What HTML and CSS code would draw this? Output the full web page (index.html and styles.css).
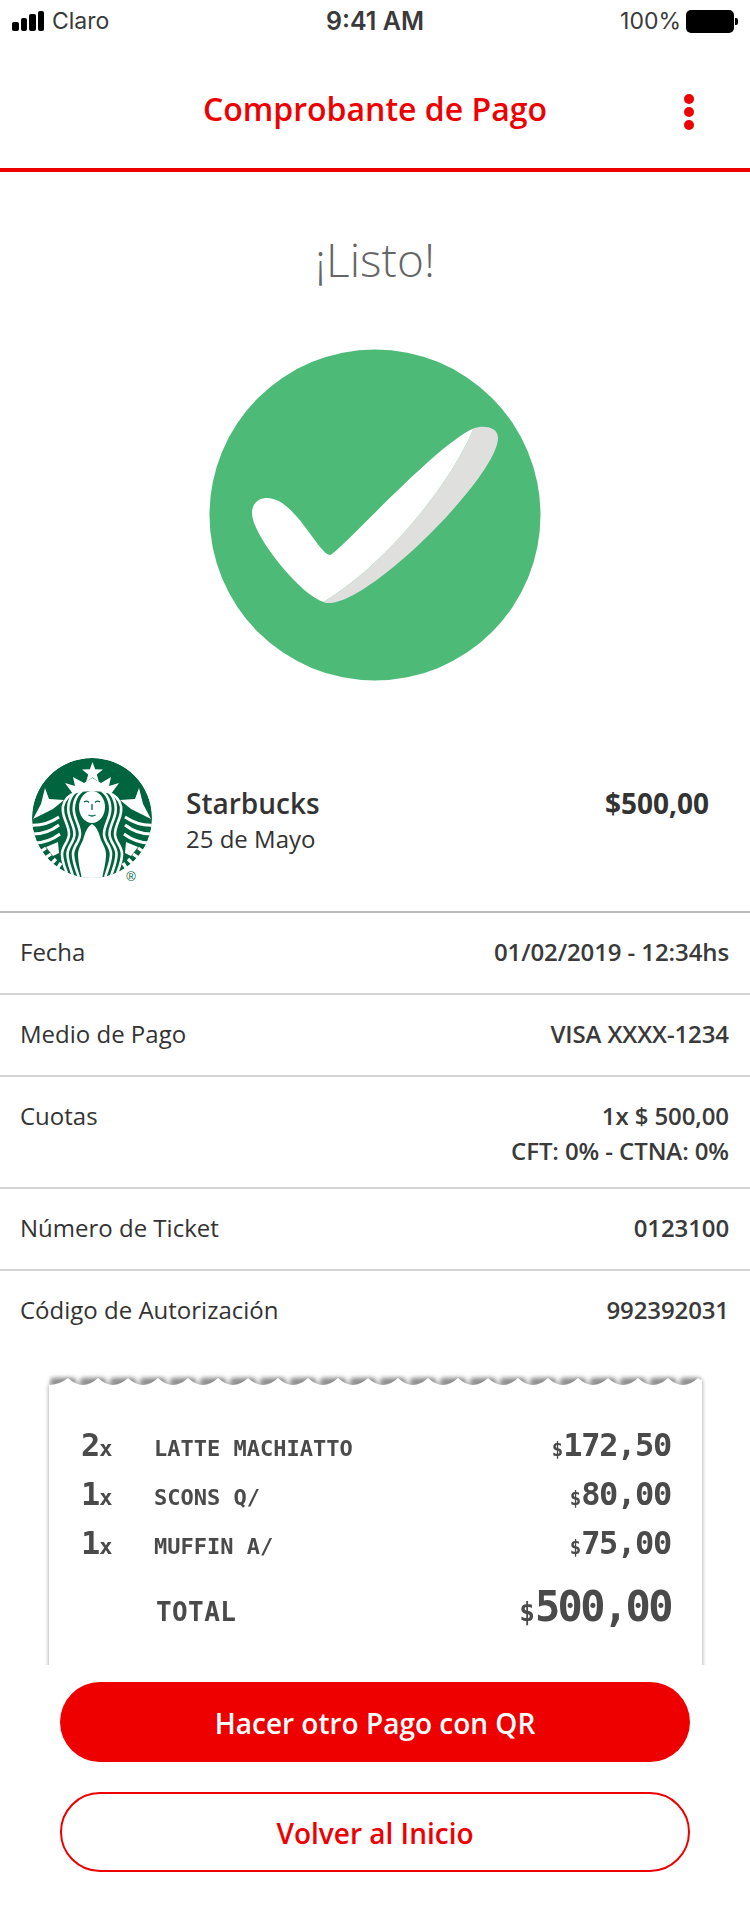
FILE: index.html
```html
<!DOCTYPE html>
<html lang="es">
<head>
<meta charset="utf-8">
<title>Comprobante de Pago</title>
<link rel="stylesheet" href="styles.css">
</head>
<body>
<div class="status">
  <div class="status-left">
    <span class="signal"><i class="b1"></i><i class="b2"></i><i class="b3"></i><i class="b4"></i></span>
    <span>Claro</span>
  </div>
  <div class="status-time">9:41 AM</div>
  <div class="status-right">
    <span>100%</span>
    <span class="battery"></span>
  </div>
</div>
<header class="topbar">
  <h1>Comprobante de Pago</h1>
  <div class="dots"><i></i><i></i><i></i></div>
</header>
<section class="hero">
  <h2>¡Listo!</h2>
  <svg class="check" width="350" height="350" viewBox="0 0 350 350">
    <circle cx="175" cy="175" r="165.5" fill="#4dba78"/>
    <path d="M273.5 88.5C282 85 298 86 298 98C298 135 170 265 128 263C126 263 124 262.5 123.5 262C185 225 250 145 273.5 88.5Z" fill="#dfdfdd"/>
    <path d="M123.5 262C100 255 52 195 52 173C52 162 60 158 67 158C95 158 118 214 130 215C137 215 235 105 273.5 88.5C250 145 185 225 123.5 262Z" fill="#fff"/>
  </svg>
</section>
<section class="merchant">
  <svg class="logo" width="140" height="140" viewBox="0 0 140 140">
    <defs><clipPath id="disc"><circle cx="72" cy="68" r="60"/></clipPath>
      <g id="half">
        <polygon points="25,38 29,49 44,50 33,59 13,69 21,54" fill="#fff"/>
        <g fill="none" stroke="#fff" stroke-width="3">
          <path d="M8 75Q24 77 39 67"/>
          <path d="M10 84Q26 85 39 75"/>
          <path d="M14 93Q28 93 40 84"/>
        </g>
        <path d="M26 97L38 92L39 103L33 106Z" fill="#fff"/>
        <g fill="none" stroke="#fff" stroke-width="3.2">
          <path d="M20 102L26 98"/>
          <path d="M25 108L31 104"/>
          <path d="M31 114L36 109"/>
          <path d="M37 119L41 113"/>
        </g>
        <g fill="none" stroke="#fff" stroke-width="2.6">
          <path d="M62 41C55 46 53 55 54 62C55 70 60 76 60 84C60 92 53 96 53 104C53 113 57 120 59 128"/>
          <path d="M56.5 41C49.5 46 47.5 55 48.5 62C49.5 70 54.5 76 54.5 84C54.5 92 47.5 96 47.5 104C47.5 113 51.5 120 53.5 128"/>
          <path d="M52 44C44 49 42 55 43 62C44 70 49 76 49 84C49 92 42 96 42 104C42 113 46 120 48 126"/>
        </g>
      </g>
    </defs>
    <g clip-path="url(#disc)">
      <circle cx="72" cy="68" r="60" fill="#00653f"/>
      <use href="#half"/>
      <use href="#half" transform="matrix(-1 0 0 1 144 0)"/>
      <path d="M72 74C66 78 65 84 63 90C60 96 58 100 58 104C58 114 61 122 62 130L82 130C83 122 86 114 86 104C86 100 84 96 81 90C79 84 78 78 72 74Z" fill="#fff"/>
      <polygon points="72.5,12 75.15,19.36 82.96,19.6 76.78,24.39 78.97,31.9 72.5,27.5 66.03,31.9 68.22,24.39 62.04,19.6 69.85,19.36" fill="#fff"/>
      <path d="M45 33L55 36L53 27L64 33L72.3 28L81 33L91 27L89 36L99 33L91 44Q72 38 53 44Z" fill="#fff"/>
      <ellipse cx="72" cy="57" rx="13" ry="16" fill="#fff"/>
      <g fill="none" stroke="#00653f" stroke-width="1.3">
        <path d="M64 52Q67 50 69 52.5"/>
        <path d="M75 52.5Q77 50 80 52"/>
        <path d="M72 54V60"/>
        <path d="M68.5 65Q72 67 75.5 65"/>
      </g>
    </g>
    <text class="reg" x="111" y="131" text-anchor="middle">®</text>
  </svg>
  <div class="merchant-info">
    <div class="merchant-name">Starbucks</div>
    <div class="merchant-date">25 de Mayo</div>
  </div>
  <div class="merchant-amount">$500,00</div>
</section>
<section class="details">
  <div class="row"><span>Fecha</span><span class="value">01/02/2019 - 12:34hs</span></div>
  <div class="row"><span>Medio de Pago</span><span class="value">VISA XXXX-1234</span></div>
  <div class="row row-tall"><span>Cuotas</span><span class="value">1x $ 500,00<br>CFT: 0% - CTNA: 0%</span></div>
  <div class="row"><span>Número de Ticket</span><span class="value">0123100</span></div>
  <div class="row"><span>Código de Autorización</span><span class="value">992392031</span></div>
</section>
<section class="receipt-clip">
  <div class="receipt">
    <svg class="edge" width="653" height="20" viewBox="0 0 653 20">
      <path class="edge-shade" d="M2 12H650"/>
      <path d="M0 15Q10 15 19 8q15 14 30 0q15 14 30 0q15 14 30 0q15 14 30 0q15 14 30 0q15 14 30 0q15 14 30 0q15 14 30 0q15 14 30 0q15 14 30 0q15 14 30 0q15 14 30 0q15 14 30 0q15 14 30 0q15 14 30 0q15 14 30 0q15 14 30 0q15 14 30 0q15 14 30 0q15 14 30 0q15 14 30 0Q651 10 653 10V20H0Z" fill="#fff"/>
    </svg>
    <div class="ticket">
      <div class="item"><span class="qty"><b>2</b>x</span><span class="name">LATTE MACHIATTO</span><span class="price"><small>$</small>172,50</span></div>
      <div class="item"><span class="qty"><b>1</b>x</span><span class="name">SCONS Q/</span><span class="price"><small>$</small>80,00</span></div>
      <div class="item"><span class="qty"><b>1</b>x</span><span class="name">MUFFIN A/</span><span class="price"><small>$</small>75,00</span></div>
      <div class="item item-total"><span class="qty"></span><span class="name">TOTAL</span><span class="price"><small>$</small>500,00</span></div>
    </div>
  </div>
</section>
<nav class="actions">
  <a class="btn btn-solid">Hacer otro Pago con QR</a>
  <a class="btn btn-outline">Volver al Inicio</a>
</nav>
</body>
</html>
```
FILE: styles.css
```css
* { box-sizing: border-box; }
html, body { margin: 0; padding: 0; background: #fff; }
body { width: 750px; height: 1912px; overflow: hidden; font-family: "Open Sans", "Liberation Sans", sans-serif; color: #333; }

.status { height: 42px; display: grid; grid-template-columns: 1fr auto 1fr; align-items: center; padding: 0 12px; font-family: Inter, "Liberation Sans", sans-serif; font-size: 23px; color: #3a3a3a; }
.status-left { display: flex; align-items: center; gap: 8px; }
.signal { display: flex; align-items: flex-end; gap: 2px; height: 20px; }
.signal i { display: block; width: 6.5px; background: #000; border-radius: 2px; }
.signal .b1 { height: 9px; }
.signal .b2 { height: 13px; }
.signal .b3 { height: 17px; }
.signal .b4 { height: 20px; }
.status-time { font-weight: 600; font-size: 25px; }
.status-right { display: flex; align-items: center; justify-content: flex-end; gap: 5px; }
.battery { position: relative; display: block; width: 48px; height: 23px; background: #000; border-radius: 5px; margin-right: 4px; }
.battery::after { content: ""; position: absolute; left: 49px; top: 8px; width: 3px; height: 7px; background: #000; border-radius: 0 2px 2px 0; }

.topbar { position: relative; height: 130px; border-bottom: 4px solid #ee0000; display: flex; align-items: center; justify-content: center; padding-top: 8px; }
.topbar h1 { margin: 0; font-size: 32px; font-weight: 600; color: #ee0000; line-height: 44px; }
.dots { position: absolute; left: 684px; top: 52px; display: flex; flex-direction: column; gap: 3px; }
.dots i { display: block; width: 10px; height: 10px; border-radius: 50%; background: #ee0000; }

.hero { display: flex; flex-direction: column; align-items: center; }
.hero h2 { margin: 57px 0 0; height: 60px; line-height: 60px; font-size: 46px; font-weight: 300; color: #666; }
.check { display: block; margin-top: 51px; }

.merchant { display: flex; align-items: flex-start; height: 161px; margin-top: 60px; padding-left: 20px; padding-right: 41px; }
.logo { display: block; flex: none; }
.reg { font-family: "Liberation Sans", sans-serif; font-size: 13px; fill: #00653f; }
.merchant-info { margin-left: 26px; padding-top: 35px; flex: 1; }
.merchant-name { font-size: 28px; font-weight: 600; line-height: 36px; }
.merchant-date { font-size: 24px; line-height: 36px; }
.merchant-amount { font-size: 28px; font-weight: 700; line-height: 36px; margin-top: 35px; }

.row { display: flex; justify-content: space-between; height: 82px; padding: 21px 21px 0 20px; border-top: 2px solid #d4d4d4; font-size: 24px; line-height: 35px; }
.row:first-child { border-top-color: #bbb; }
.row-tall { height: 112px; }
.value { text-align: right; font-weight: 600; letter-spacing: -.1px; color: #3a3a3a; }

.receipt-clip { margin-top: 19px; height: 295px; overflow: hidden; padding: 0 48px 0 49px; }
.receipt { height: 320px; filter: drop-shadow(0 0 2px rgba(0, 0, 0, .4)); }
.edge { display: block; }
.edge-shade { fill: none; stroke: #8c8c8c; stroke-width: 6px; stroke-dasharray: 24 6; filter: blur(2px); }
.ticket { height: 300px; background: #fff; padding: 36px 31px 0 32px; color: #4a4a4a; font-family: "DejaVu Sans Mono", "Liberation Mono", monospace; font-weight: 700; }
.item { display: flex; align-items: baseline; height: 49px; }
.qty { width: 73px; font-size: 22px; }
.qty b { font-size: 32px; letter-spacing: -1px; }
.name { font-size: 22px; flex: 1; }
.price { font-size: 32px; letter-spacing: -1.3px; }
.price small { font-size: 19px; letter-spacing: 0; }
.item-total { margin-top: 9px; }
.item-total .name { font-size: 26px; letter-spacing: .4px; padding-left: 2px; }
.item-total .price { font-size: 42px; letter-spacing: -2.6px; }
.item-total .price small { font-size: 26px; }

.actions { display: flex; flex-direction: column; gap: 30px; margin-top: 17px; padding: 0 60px; }
.btn { display: flex; align-items: center; justify-content: center; height: 80px; border-radius: 40px; font-size: 28px; font-weight: 600; padding-top: 2px; }
.btn-solid { background: #ee0000; color: #fff; }
.btn-outline { border: 2px solid #ee0000; color: #ee0000; }
```
